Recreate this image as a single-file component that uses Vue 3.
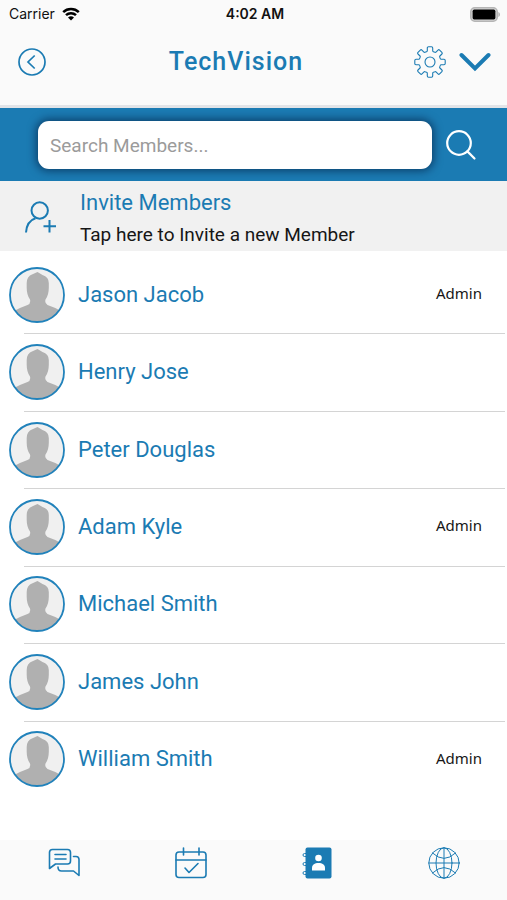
<script setup>
import { ref } from 'vue'

const query = ref('')
const members = [
  { name: 'Jason Jacob', role: 'Admin' },
  { name: 'Henry Jose' },
  { name: 'Peter Douglas' },
  { name: 'Adam Kyle', role: 'Admin' },
  { name: 'Michael Smith' },
  { name: 'James John' },
  { name: 'William Smith', role: 'Admin' },
]
</script>

<template>
  <div class="screen">
    <div class="status">
      <div class="carrier">
        <span>Carrier</span>
        <svg class="wifi" viewBox="0 0 18 14" aria-hidden="true">
          <path d="M1.2 5.2a11.3 11.3 0 0 1 15.6 0" />
          <path d="M4 8.2a7.2 7.2 0 0 1 10 0" />
          <path class="dot" d="M9 13.6 6 10.6a4.3 4.3 0 0 1 6 0z" />
        </svg>
      </div>
      <span class="time">4:02 AM</span>
      <svg class="battery" viewBox="0 0 31 15" aria-hidden="true">
        <rect x="0.8" y="0.8" width="26.4" height="13.4" rx="4" fill="#d8d8d8" stroke="#b5b5b5" stroke-width="1.6" />
        <rect x="2.6" y="2.6" width="22.8" height="9.8" rx="1.6" fill="#000" />
        <path d="M28.300 5v5c2.300-.8 2.300-4.200 0-5z" fill="#b5b5b5" />
      </svg>
    </div>

    <header class="bar">
      <button class="icon-btn" type="button" aria-label="Back">
        <svg class="back" viewBox="0 0 28 28">
          <circle cx="14" cy="14" r="13" stroke-width="1.700" />
          <path d="M16.700 7.500 10 14l6.700 6.500" stroke-width="1.700" />
        </svg>
      </button>
      <h1>TechVision</h1>
      <div class="actions">
        <button class="icon-btn" type="button" aria-label="Settings">
          <svg class="gear" viewBox="0 0 32 32">
            <path d="M13.300 4.800V2q0-1.200 1.200-1.200h3q1.200 0 1.200 1.200v2.800a1 1 0 0 0 .7.900l1.500.6a1 1 0 0 0 1.100-.2l2-2q.8-.8 1.600 0l2.300 2.300q.8.8 0 1.600l-2 2a1 1 0 0 0-.2 1.100l.6 1.500a1 1 0 0 0 .9.700H30q1.200 0 1.200 1.200v3q0 1.200-1.200 1.200h-2.800a1 1 0 0 0-.9.700l-.6 1.500a1 1 0 0 0 .2 1.100l2 2q.8.8 0 1.600l-2.300 2.300q-.8.8-1.600 0l-2-2a1 1 0 0 0-1.100-.2l-1.500.6a1 1 0 0 0-.7.900V30q0 1.200-1.200 1.200h-3q-1.200 0-1.200-1.200v-2.800a1 1 0 0 0-.7-.9l-1.500-.6a1 1 0 0 0-1.100.2l-2 2q-.8.8-1.600 0L4 25.600q-.8-.8 0-1.600l2-2a1 1 0 0 0 .2-1.100l-.6-1.500a1 1 0 0 0-.9-.7H2Q.8 18.700.8 17.500v-3q0-1.200 1.200-1.200h2.700a1 1 0 0 0 .9-.7l.6-1.500A1 1 0 0 0 6 10L4 8q-.8-.8 0-1.600l2.300-2.300q.8-.8 1.600 0l2 2a1 1 0 0 0 1.100.2l1.500-.6a1 1 0 0 0 .8-.9z" />
            <circle cx="16" cy="16" r="5" />
          </svg>
        </button>
        <button class="icon-btn" type="button" aria-label="More options">
          <svg class="chevron" viewBox="0 0 32 20">
            <path d="M2.500 3 16 16.500 29.500 3" />
          </svg>
        </button>
      </div>
    </header>

    <form class="search" @submit.prevent>
      <input v-model="query" type="text" placeholder="Search Members..." aria-label="Search Members" />
      <button class="icon-btn" type="submit" aria-label="Search">
        <svg class="lens" viewBox="0 0 32 32">
          <circle cx="14" cy="14" r="11.800" />
          <path d="m22.400 22.400 7.100 7.100" />
        </svg>
      </button>
    </form>

    <button class="invite" type="button">
      <svg class="invite-icon" viewBox="0 0 32 32" aria-hidden="true">
        <circle cx="15.700" cy="9.500" r="8.200" />
        <path d="M2 31.500C2.500 24 6 19 11.500 17.200M25.500 19v12.500M19.500 25.200H32" />
      </svg>
      <span class="invite-text">
        <span class="invite-title">Invite Members</span>
        <span class="invite-sub">Tap here to Invite a new Member</span>
      </span>
    </button>

    <ul class="members">
      <li v-for="m in members" :key="m.name">
        <svg class="avatar" viewBox="0 0 56 56" aria-hidden="true">
          <circle cx="28" cy="28" r="27" fill="#f0f0f0" />
          <path d="M28.500 5 33.500 8Q39.800 10 39.800 16V21Q39.800 28 36.500 32.500 35.500 36.500 38.500 38 46 40.500 51 43.600A28 28 0 0 1 6 43.600Q11.500 40.500 18.500 38 22 36.500 21 32.500 17.700 28 17.700 21V16Q17.700 9.500 23.500 7.300z" fill="#b0b0b0" />
          <circle cx="28" cy="28" r="27" fill="none" stroke="#2182bb" stroke-width="1.800" />
        </svg>
        <span class="name">{{ m.name }}</span>
        <span v-if="m.role" class="role">{{ m.role }}</span>
      </li>
    </ul>

    <nav class="tabs">
      <a href="#chat" aria-label="Chat">
        <svg viewBox="0 0 32 32">
          <path d="M1.500 21.500V5.500q0-3 3-3h15q3 0 3 3v8.500q0 3-3 3H7.500zM7 7.500h11M7 12h11M25.500 9.500h2.500q3 0 3 3v16L25.500 24H13.500q-3.500 0-3.500-4" />
        </svg>
      </a>
      <a href="#calendar" aria-label="Calendar">
        <svg viewBox="0 0 32 32">
          <rect x="1" y="5" width="30" height="25.500" rx="3" />
          <path d="M1 13h30M8.500 1v7M24 1v7M10 21l4 4.500 9-9" />
        </svg>
      </a>
      <a href="#members" aria-label="Members" aria-current="page">
        <svg viewBox="0 0 32 32">
          <path d="M6 6.500H3.500a1.500 1.500 0 0 0 0 3H6M6 15.500H3.500a1.500 1.500 0 0 0 0 3H6M6 24.500H3.500a1.500 1.500 0 0 0 0 3H6" stroke-width="1" />
          <rect x="4.500" y="0.500" width="26" height="31" rx="2" fill="#1b7bb3" stroke="none" />
          <circle cx="17.500" cy="11" r="3.300" fill="#fff" stroke="none" />
          <path d="M11 23.500v-2.500c0-3.500 2.700-5 6.500-5s6.500 1.500 6.500 5v2.500z" fill="#fff" stroke="none" />
        </svg>
      </a>
      <a href="#web" aria-label="Web">
        <svg class="globe" viewBox="0 0 32 32">
          <circle cx="16" cy="16" r="15.200" />
          <ellipse cx="16" cy="16" rx="8" ry="15.200" />
          <path d="M16 .8v30.400M.8 16h30.400M4.500 6Q16 17 27.500 6M4.500 26Q16 15 27.500 26" />
        </svg>
      </a>
    </nav>
  </div>
</template>

<style>
body {
  margin: 0;
  background: #fff;
}
</style>

<style scoped>
.screen {
  display: flex;
  flex-direction: column;
  min-height: 100vh;
  font-family: Roboto, "Liberation Sans", sans-serif;
  color: #1b7bb3;
}
svg {
  display: block;
  flex: none;
}
.status {
  display: grid;
  grid-template-columns: 1fr auto 1fr;
  align-items: center;
  height: 28px;
  padding: 0 6px 0 9px;
  background: #fafafa;
  color: #111;
  font: 14px/28px Inter, sans-serif;
}
.carrier {
  display: flex;
  align-items: center;
  gap: 7px;
}
.wifi {
  width: 18px;
  height: 14px;
  fill: none;
  stroke: #000;
  stroke-width: 2.5;
}
.wifi .dot {
  fill: #000;
  stroke: none;
}
.time {
  font-weight: 600;
}
.battery {
  justify-self: end;
  width: 31px;
  height: 15px;
}
.bar {
  display: grid;
  grid-template-columns: 40px 1fr auto;
  align-items: center;
  padding: 15px 16px 25px 18px;
  background: #fafafa;
  border-bottom: 3px solid #e2e4e8;
}
.bar h1 {
  margin: 0;
  font-size: 25px;
  line-height: 37px;
  font-weight: 500;
  letter-spacing: 1px;
  text-align: center;
}
.icon-btn {
  display: flex;
  justify-self: start;
  padding: 0;
  border: 0;
  background: none;
  color: inherit;
  cursor: pointer;
}
.icon-btn svg,
.invite-icon,
.tabs svg {
  fill: none;
  stroke: currentColor;
}
.back {
  width: 28px;
  height: 28px;
}
.actions {
  display: flex;
  justify-content: flex-end;
  align-items: center;
  gap: 13px;
}
.gear {
  width: 32px;
  height: 32px;
  stroke-width: 1.1;
}
.chevron {
  width: 32px;
  height: 20px;
  stroke-width: 4;
  stroke-linecap: round;
}
.search {
  display: flex;
  align-items: center;
  gap: 13px;
  padding: 13px 30px 12px 38px;
  background: #1b7bb3;
}
.search input {
  flex: 1;
  min-width: 0;
  height: 48px;
  box-sizing: border-box;
  padding: 0 12px;
  border: 0;
  border-radius: 11px;
  outline: 0;
  background: #fff;
  box-shadow: 0 0 8px 2px rgba(0, 25, 60, 0.6);
  color: #222;
  font: 19px/24px Roboto, sans-serif;
}
.search input::placeholder {
  color: #9b9b9b;
  opacity: 1;
}
.search .icon-btn {
  color: #fff;
}
.lens {
  width: 32px;
  height: 32px;
  stroke-width: 2.2;
  stroke-linecap: round;
}
.invite {
  display: flex;
  align-items: center;
  gap: 24px;
  height: 70px;
  padding: 2px 24px 0;
  border: 0;
  background: #f1f1f1;
  color: inherit;
  font: inherit;
  text-align: left;
  cursor: pointer;
}
.invite-icon {
  width: 32px;
  height: 32px;
  stroke-width: 2;
}
.invite-text {
  display: flex;
  flex-direction: column;
  padding-top: 4px;
}
.invite-title {
  font-size: 22px;
  line-height: 32px;
}
.invite-sub {
  color: #161616;
  font-size: 19px;
  line-height: 32px;
}
.members {
  display: grid;
  grid-auto-rows: 1fr;
  flex: 1;
  margin: 0;
  padding: 5px 0 42px;
  list-style: none;
  background: #fff;
}
.members li {
  position: relative;
  display: flex;
  align-items: center;
  gap: 13px;
  padding: 0 25px 0 9px;
}
.members li + li::before {
  content: "";
  position: absolute;
  top: 0;
  left: 24px;
  right: 2px;
  height: 1px;
  background: #d4d4d4;
}
.avatar {
  width: 56px;
  height: 56px;
}
.name {
  flex: 1;
  font-size: 22px;
  line-height: 28px;
}
.role {
  padding-bottom: 3px;
  color: #161616;
  font: 15px/20px "Noto Sans", sans-serif;
}
.tabs {
  display: grid;
  grid-template-columns: repeat(4, 1fr);
  height: 60px;
  padding-left: 1px;
  background: #fafafa;
}
.tabs a {
  display: flex;
  justify-content: center;
  align-items: flex-start;
  padding-top: 7px;
  color: inherit;
}
.tabs svg {
  width: 32px;
  height: 32px;
  stroke-width: 1.6;
  stroke-linecap: round;
  stroke-linejoin: round;
}
.tabs .globe {
  stroke-width: 1;
}
</style>
